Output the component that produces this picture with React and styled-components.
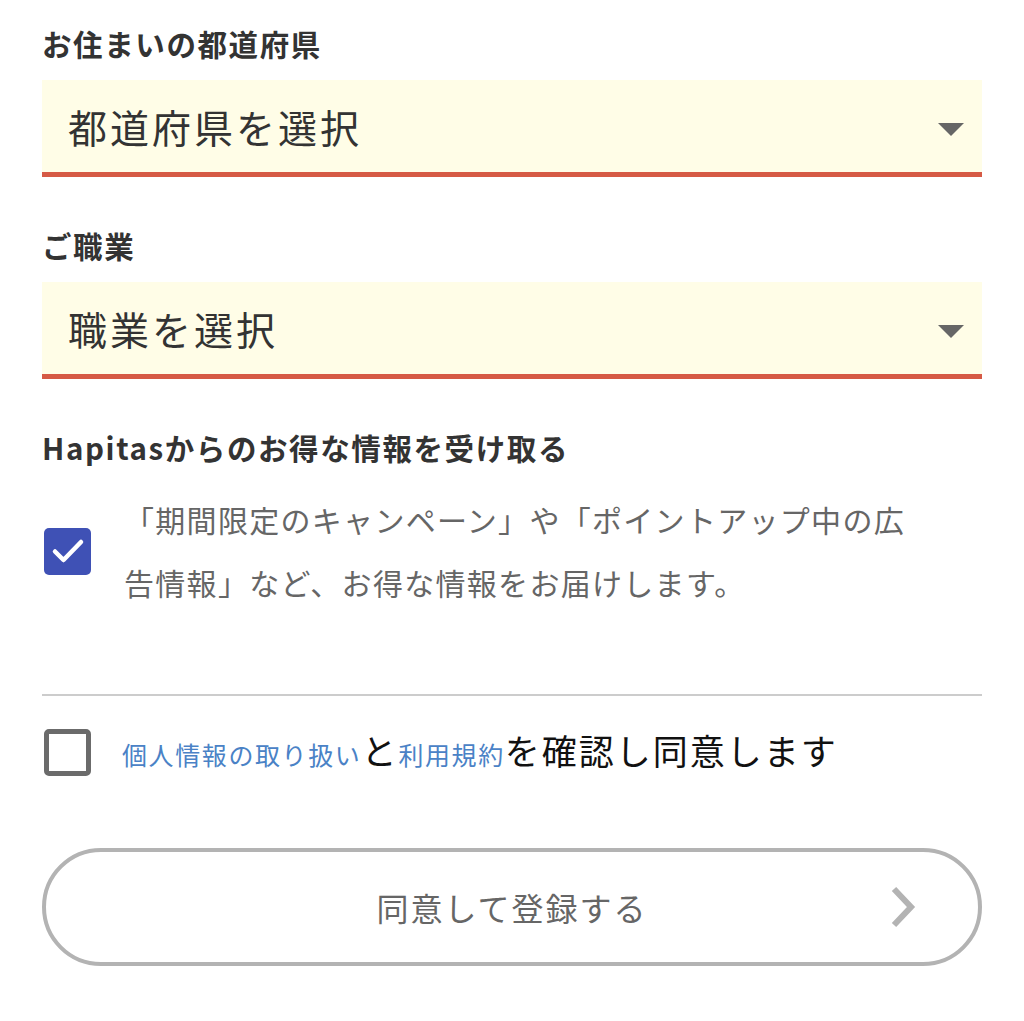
import styled, { createGlobalStyle } from "styled-components";

const GlobalStyle = createGlobalStyle`
  html, body {
    margin: 0;
    padding: 0;
    background: #ffffff;
  }
  body {
    font-family: "Noto Sans CJK JP", "Noto Sans", sans-serif;
    color: #333333;
  }
`;

export default function App() {
  return (
    <>
      <GlobalStyle />
      <StyledPage>
        <StyledField>
          <StyledLabel>お住まいの都道府県</StyledLabel>
          <StyledSelect>
            <span>都道府県を選択</span>
            <StyledCaret />
          </StyledSelect>
        </StyledField>
        <StyledField>
          <StyledLabel>ご職業</StyledLabel>
          <StyledSelect>
            <span>職業を選択</span>
            <StyledCaret />
          </StyledSelect>
        </StyledField>
        <StyledField>
          <StyledLabel>Hapitasからのお得な情報を受け取る</StyledLabel>
          <StyledOptRow>
            <StyledCheckbox $checked>
              <svg width="34" height="28" viewBox="0 0 34 28">
                <path
                  d="M4 14.5 L12.5 23 L30 5"
                  fill="none"
                  stroke="#ffffff"
                  strokeWidth="4.5"
                  strokeLinecap="round"
                  strokeLinejoin="round"
                />
              </svg>
            </StyledCheckbox>
            <StyledOptText>
              「期間限定のキャンペーン」や「ポイントアップ中の広告情報」など、お得な情報をお届けします。
            </StyledOptText>
          </StyledOptRow>
        </StyledField>

        <StyledDivider />

        <StyledAgreeRow>
          <StyledCheckbox />
          <StyledAgreeText>
            <StyledLink href="#">個人情報の取り扱い</StyledLink>と
            <StyledLink href="#">利用規約</StyledLink>を確認し同意します
          </StyledAgreeText>
        </StyledAgreeRow>

        <StyledButton type="button">
          同意して登録する
          <StyledChevron width="30" height="44" viewBox="0 0 30 44">
            <path
              d="M6 4 L23 22 L6 40"
              fill="none"
              stroke="#b3b3b3"
              strokeWidth="6"
            />
          </StyledChevron>
        </StyledButton>
      </StyledPage>
    </>
  );
}

const StyledPage = styled.main`
  display: flex;
  flex-direction: column;
  padding: 22px 42px 40px;
`;

const StyledField = styled.section`
  display: flex;
  flex-direction: column;
  gap: 16px;
  & + & {
    margin-top: 47px;
  }
`;

const StyledLabel = styled.h2`
  margin: 0;
  font-size: 29.5px;
  line-height: 42px;
  font-weight: 700;
  letter-spacing: 1.6px;
  color: #333333;
`;

const StyledSelect = styled.div`
  position: relative;
  display: flex;
  align-items: center;
  height: 92px;
  padding: 0 26px;
  background: #fffde7;
  border-bottom: 5px solid #d65a45;
  font-size: 39px;
  letter-spacing: 3px;
  color: #333333;
`;

const StyledCaret = styled.span`
  margin-left: auto;
  margin-right: -8px;
  margin-top: 6px;
  width: 0;
  height: 0;
  border-left: 13px solid transparent;
  border-right: 13px solid transparent;
  border-top: 13px solid #666666;
`;

const StyledOptRow = styled.div`
  display: flex;
  align-items: center;
  gap: 33px;
  margin-top: 4px;
  padding-left: 2px;
`;

const StyledCheckbox = styled.span`
  flex: none;
  box-sizing: border-box;
  display: flex;
  align-items: center;
  justify-content: center;
  width: 47px;
  height: 47px;
  border-radius: 5px;
  background: ${(p) => (p.$checked ? "#3f51b5" : "#ffffff")};
  border: ${(p) => (p.$checked ? "none" : "5px solid #6b6b6b")};
`;

const StyledOptText = styled.p`
  margin: 0;
  width: 800px;
  font-size: 30px;
  line-height: 63px;
  letter-spacing: 1.3px;
  color: #666666;
`;

const StyledDivider = styled.hr`
  margin: 80px 0 0;
  border: none;
  height: 2px;
  background: #cccccc;
`;

const StyledAgreeRow = styled.div`
  display: flex;
  align-items: center;
  gap: 31px;
  margin-top: 30px;
  padding-left: 2px;
`;

const StyledAgreeText = styled.p`
  margin: 0;
  font-size: 35px;
  line-height: 48px;
  letter-spacing: 2px;
  color: #111111;
`;

const StyledLink = styled.a`
  font-size: 25px;
  letter-spacing: 1.6px;
  color: #4a82c6;
  text-decoration: none;
`;

const StyledButton = styled.button`
  position: relative;
  display: flex;
  align-items: center;
  justify-content: center;
  margin-top: 70px;
  height: 118px;
  border: 4px solid #b3b3b3;
  border-radius: 59px;
  background: #ffffff;
  font-family: "Noto Sans CJK JP", "Noto Sans", sans-serif;
  font-size: 32px;
  letter-spacing: 2px;
  color: #666666;
`;

const StyledChevron = styled.svg`
  position: absolute;
  right: 60px;
  top: 50%;
  transform: translateY(-50%);
`;
